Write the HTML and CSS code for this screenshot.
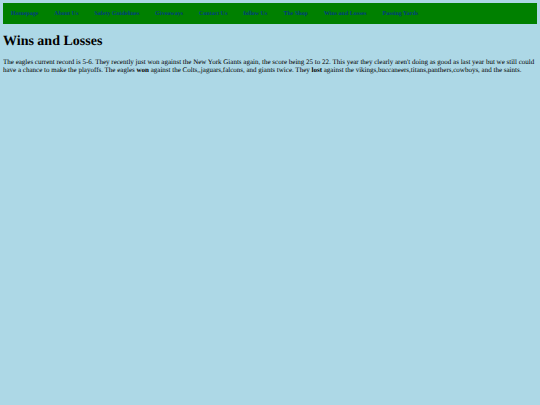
FILE: index.html
```html
<!DOCTYPE html>
<html lang="en">
<head>
    <meta charset="UTF-8">
    <meta name="viewport" content="width=device-width, initial-scale=1.0">
    <title>Wins and Losses</title>
    <link rel="stylesheet" href="styles.css">
</head>
<body>

    <nav>
        <ul class="menu">
            <li><a href="#">Homepage</a></li>
            <li><a href="#">About Us</a></li>
            <li><a href="#">Safety Guidelines</a></li>
            <li><a href="#">Giveaways</a></li>
            <li><a href="#">Contact Us</a></li>
            <li><a href="#">follow Us</a></li>
            <li><a href="#">The Shop</a></li>
            <li><a href="#">Wins and Losses</a></li>
            <li><a href="#">Passing Yards</a></li>
        </ul>
    </nav>

    <h1>Wins and Losses</h1>

    <p>The eagles current record is 5-6. They recently just won against the New York Giants again, the score being 25 to 22. This year they clearly aren't doing as good as last year but we still could have a chance to make the playoffs. The eagles <b>won</b> against the Colts,,jaguars,falcons, and giants twice. They <b>lost</b> against the vikings,buccaneers,titans,panthers,cowboys, and the saints.</p>

</body>
</html>
```
FILE: styles.css
```css
body {
    margin: 3px;
    background-color: lightblue;
    color: black;
    font-family: "Liberation Serif", "Times New Roman", serif;
    font-size: 7px;
    line-height: 8px;
    text-rendering: geometricPrecision;
}

.menu {
    display: flex;
    margin: 0;
    padding: 0;
    list-style: none;
    background-color: green;
}

.menu a {
    display: block;
    padding: 8px 8px 6px;
    color: #003c82;
    font-size: 6px;
    font-weight: bold;
    line-height: 7px;
    text-decoration: none;
}

h1 {
    margin: 10px 0 8px;
    font-size: 14px;
    line-height: 16px;
}

p {
    margin: 0;
}
```
